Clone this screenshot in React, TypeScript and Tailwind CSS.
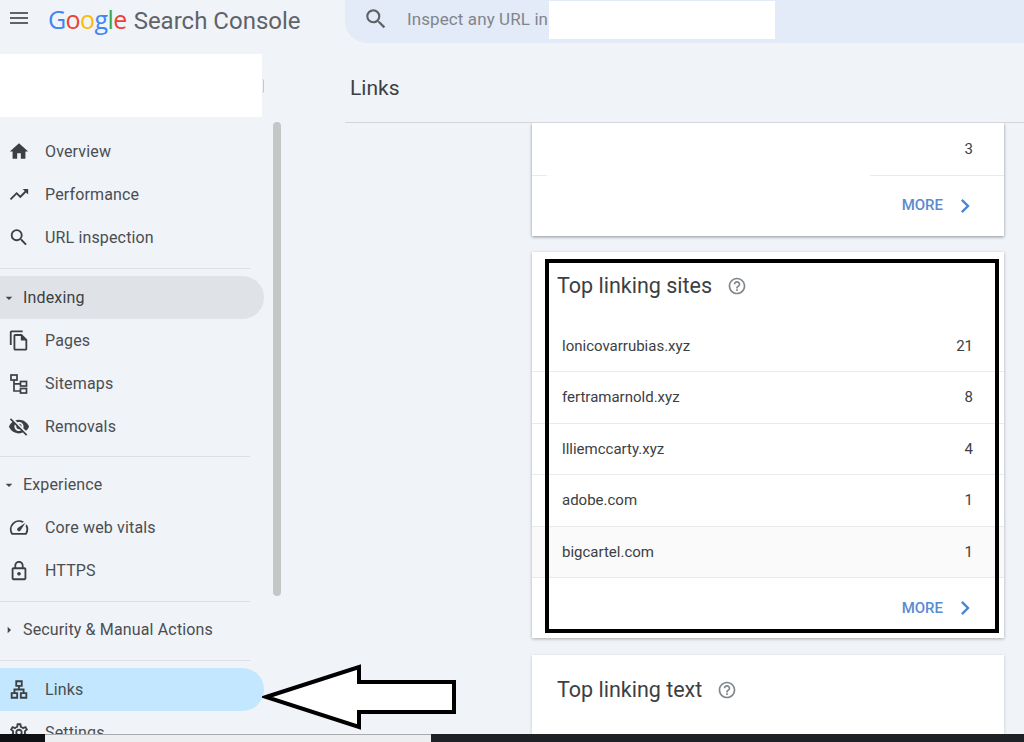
import type { ReactNode } from "react";
import {
  MdArrowDropDown,
  MdArrowRight,
  MdChevronRight,
  MdHelpOutline,
  MdHome,
  MdLockOutline,
  MdMenu,
  MdOutlineFileCopy,
  MdOutlineLan,
  MdOutlineSettings,
  MdOutlineSpeed,
  MdVisibilityOff,
  MdSearch,
  MdTrendingUp,
} from "react-icons/md";

function SitemapIcon() {
  return (
    <svg width="20" height="20" viewBox="0 0 20 20" fill="none" stroke="currentColor" strokeWidth="1.7">
      <rect x="2" y="1" width="6" height="5" />
      <rect x="11.5" y="7.5" width="6" height="4.5" />
      <rect x="11.5" y="14.5" width="6" height="4.5" />
      <path d="M5 6v11h6.5M5 9.8h6.5" />
    </svg>
  );
}

function NavItem({ icon, label, active }: { icon: ReactNode; label: string; active?: boolean }) {
  return (
    <div className={`flex h-[43px] w-[264px] items-center rounded-r-full pl-[8px] ${active ? "bg-[#c2e7ff]" : ""}`}>
      <span className="flex w-[22px] justify-center text-[23px] text-[#3c4043]">{icon}</span>
      <span className="ml-[15px] text-[16px] tracking-[0.15px] text-[#4a4e52]">{label}</span>
    </div>
  );
}

function NavGroup({ label, open, active }: { label: string; open?: boolean; active?: boolean }) {
  return (
    <div className={`flex h-[43px] w-[264px] items-center rounded-r-full pl-[1px] ${active ? "bg-[#dfe3e8]" : ""}`}>
      <span className="flex w-[16px] justify-center text-[20px] text-[#444746]">
        {open ? <MdArrowDropDown /> : <MdArrowRight />}
      </span>
      <span className={`ml-[6px] text-[16px] tracking-[0.15px] ${active ? "text-[#3c4043]" : "text-[#4a4e52]"}`}>{label}</span>
    </div>
  );
}

function Divider({ className }: { className: string }) {
  return <div className={`h-[1px] w-[250px] bg-[#dcdfe3] ${className}`} />;
}

function MoreRow({ className }: { className: string }) {
  return (
    <div className={`flex items-center justify-end pr-[25px] ${className}`}>
      <span className="text-[15px] font-medium text-[#5b8ad0]">MORE</span>
      <MdChevronRight className="ml-[8px] text-[28px] text-[#4a85d6]" />
    </div>
  );
}

const sites = [
  ["lonicovarrubias.xyz", "21"],
  ["fertramarnold.xyz", "8"],
  ["llliemccarty.xyz", "4"],
  ["adobe.com", "1"],
  ["bigcartel.com", "1"],
];

export default function App() {
  return (
    <div className="relative flex h-[742px] w-[1024px] flex-col overflow-hidden bg-[#f0f3f8] font-['Roboto',sans-serif]">
      <div className="flex min-h-0 flex-1">
        <aside className="flex w-[345px] shrink-0 flex-col overflow-hidden">
          <div className="flex h-[54px] shrink-0 items-start pt-[3px]">
            <MdMenu className="ml-[7px] mt-[3px] text-[24px] text-[#5f6368]" />
            <div className="ml-[17px] flex items-baseline text-[24px] leading-[32px] text-[#5f6368]">
              <span className="font-['Open_Sans',sans-serif] text-[25px] font-medium tracking-[-0.6px]">
                <span className="text-[#4285f4]">G</span>
                <span className="text-[#ea4335]">o</span>
                <span className="text-[#fbbc05]">o</span>
                <span className="text-[#4285f4]">g</span>
                <span className="text-[#34a853]">l</span>
                <span className="text-[#ea4335]">e</span>
              </span>
              <span className="ml-[7px]">Search Console</span>
            </div>
          </div>
          <div className="flex h-[63px] shrink-0 items-center">
            <div className="h-full w-[262px] bg-white" />
            <div className="h-[14px] w-[2px] rounded-r-full border-r border-[#c4c6c7]" />
          </div>
          <div className="flex min-h-0 flex-1">
            <nav className="w-[264px] shrink-0 pt-[13px]">
              <NavItem icon={<MdHome />} label="Overview" />
              <NavItem icon={<MdTrendingUp />} label="Performance" />
              <NavItem icon={<MdSearch />} label="URL inspection" />
              <Divider className="mt-[9px] mb-[7px]" />
              <NavGroup label="Indexing" open active />
              <NavItem icon={<MdOutlineFileCopy />} label="Pages" />
              <NavItem icon={<SitemapIcon />} label="Sitemaps" />
              <NavItem icon={<MdVisibilityOff />} label="Removals" />
              <Divider className="mt-[8px] mb-[6px]" />
              <NavGroup label="Experience" open />
              <NavItem icon={<MdOutlineSpeed />} label="Core web vitals" />
              <NavItem icon={<MdLockOutline className="text-[26px]" />} label="HTTPS" />
              <Divider className="mt-[9px] mb-[6px]" />
              <NavGroup label="Security & Manual Actions" />
              <Divider className="mt-[9px] mb-[7px]" />
              <NavItem icon={<MdOutlineLan />} label="Links" active />
              <NavItem icon={<MdOutlineSettings />} label="Settings" />
            </nav>
            <div className="ml-[9px] mt-[5px] h-[474px] w-[8px] rounded-full bg-[#c4c6c7]" />
          </div>
        </aside>

        <main className="flex min-w-0 flex-1 flex-col">
          <div className="flex h-[43px] shrink-0 items-center rounded-bl-[22px] bg-[#e3ebf8] pl-[18px]">
            <MdSearch className="mb-[5px] text-[26px] text-[#5f6368]" />
            <span className="mb-[3px] ml-[18px] text-[17px] tracking-[0.1px] text-[#80868b]">Inspect any URL in</span>
            <div className="mb-[4px] ml-[1px] h-[38px] w-[226px] bg-white" />
          </div>
          <div className="flex h-[80px] shrink-0 items-center border-b border-[#d3d6da] pl-[5px] pt-[12px] text-[21px] text-[#3c4043]">
            Links
          </div>
          <div className="min-h-0 flex-1 overflow-hidden pl-[187px] pr-[20px]">
            <section className="h-[113px] bg-white shadow-[0_1px_3px_rgba(60,64,67,0.55)]">
              <div className="flex h-[52px] items-center justify-end pr-[31px] text-[15px] text-[#3c4043]">3</div>
              <div className="flex h-[1px] justify-between">
                <div className="w-[15px] bg-[#e8eaed]" />
                <div className="w-[134px] bg-[#e8eaed]" />
              </div>
              <MoreRow className="h-[59px]" />
            </section>

            <section className="relative mt-[16px] h-[386px] bg-white shadow-[0_1px_3px_rgba(60,64,67,0.4)]">
              <div className="flex h-[69px] items-center pb-[1px] pl-[25px] text-[21.5px] text-[#3c4043]">
                Top linking sites
                <MdHelpOutline className="ml-[15px] text-[20px] text-[#80868b]" />
              </div>
              {sites.map(([name, count], i) => (
                <div
                  key={name}
                  className={`flex h-[51.4px] items-center justify-between border-b border-[#e8eaed] pl-[30px] pr-[31px] text-[15px] text-[#3c4043] ${i === 4 ? "bg-[#fafafa]" : ""}`}
                >
                  <span>{name}</span>
                  <span>{count}</span>
                </div>
              ))}
              <MoreRow className="h-[60px]" />
              <div className="absolute bottom-[5px] left-[13px] right-[5px] top-[7px] border-4 border-black" />
            </section>

            <section className="mt-[17px] h-[100px] bg-white shadow-[0_1px_3px_rgba(60,64,67,0.25)]">
              <div className="flex h-[70px] items-center pl-[25px] text-[21.5px] text-[#3c4043]">
                Top linking text
                <MdHelpOutline className="ml-[15px] text-[20px] text-[#80868b]" />
              </div>
            </section>
          </div>
        </main>
      </div>

      <div className="flex h-[8px] shrink-0">
        <div className="w-[45px] bg-[#0e1014]" />
        <div className="w-[386px] border-t border-[#a9abae] bg-[#eceef0]" />
        <div className="flex-1 bg-[#1e2126]" />
      </div>

      <svg className="absolute left-[262px] top-[662px]" width="196" height="70" viewBox="0 0 196 70">
        <polygon
          points="4,35 97,5 97,20 192,20 192,50 97,50 97,65"
          fill="white"
          stroke="black"
          strokeWidth="4"
        />
      </svg>
    </div>
  );
}
